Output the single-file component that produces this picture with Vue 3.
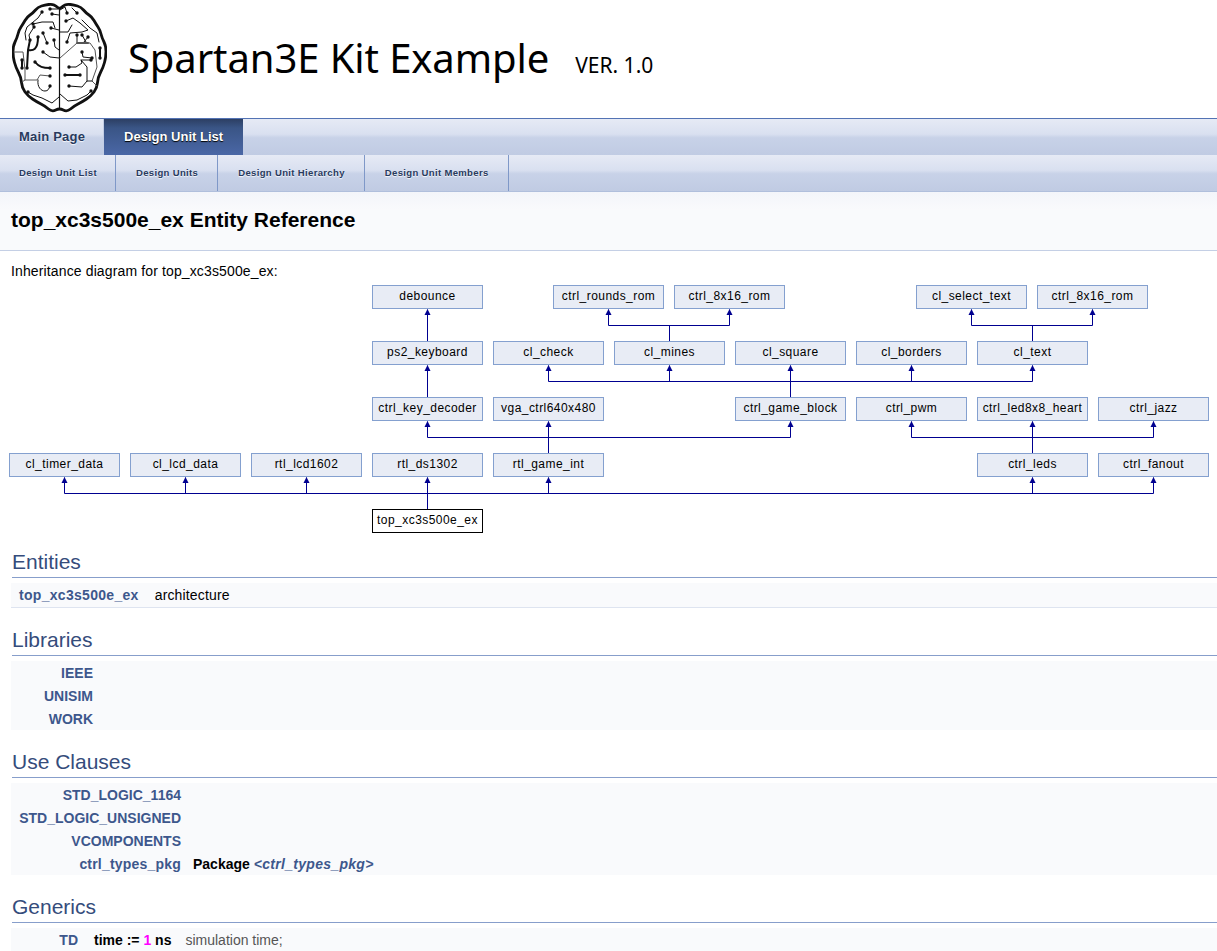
<script setup>
const boxW = 111
const boxH = 24
const diagramTop = 251
const nodes = [
  { name: 'debounce', x: 372, y: 285 },
  { name: 'ctrl_rounds_rom', x: 553, y: 285 },
  { name: 'ctrl_8x16_rom', x: 674, y: 285 },
  { name: 'cl_select_text', x: 916, y: 285 },
  { name: 'ctrl_8x16_rom', x: 1037, y: 285 },
  { name: 'ps2_keyboard', x: 372, y: 341 },
  { name: 'cl_check', x: 493, y: 341 },
  { name: 'cl_mines', x: 614, y: 341 },
  { name: 'cl_square', x: 735, y: 341 },
  { name: 'cl_borders', x: 856, y: 341 },
  { name: 'cl_text', x: 977, y: 341 },
  { name: 'ctrl_key_decoder', x: 372, y: 397 },
  { name: 'vga_ctrl640x480', x: 493, y: 397 },
  { name: 'ctrl_game_block', x: 735, y: 397 },
  { name: 'ctrl_pwm', x: 856, y: 397 },
  { name: 'ctrl_led8x8_heart', x: 977, y: 397 },
  { name: 'ctrl_jazz', x: 1098, y: 397 },
  { name: 'cl_timer_data', x: 9, y: 453 },
  { name: 'cl_lcd_data', x: 130, y: 453 },
  { name: 'rtl_lcd1602', x: 251, y: 453 },
  { name: 'rtl_ds1302', x: 372, y: 453 },
  { name: 'rtl_game_int', x: 493, y: 453 },
  { name: 'ctrl_leds', x: 977, y: 453 },
  { name: 'ctrl_fanout', x: 1098, y: 453 },
  { name: 'top_xc3s500e_ex', x: 372, y: 509, root: true }
]

// x of each arrow head + y just below the parent box
const arrows = [
  [427, 309], [608, 309], [729, 309], [971, 309], [1092, 309],
  [427, 365], [548, 365], [669, 365], [790, 365], [911, 365], [1032, 365],
  [427, 421], [548, 421], [790, 421], [911, 421], [1032, 421], [1153, 421],
  [64, 477], [185, 477], [306, 477], [427, 477], [548, 477], [1032, 477], [1153, 477]
]

const wires = [
  'M427 309V341', 'M427 365V397', 'M427 477V509',
  'M608 309V325H729V309', 'M669 325V341',
  'M971 309V325H1092V309', 'M1032 325V341',
  'M548 365V381H1032V365', 'M669 365V381', 'M790 365V397', 'M911 365V381',
  'M427 421V437H790V421', 'M548 421V453',
  'M911 421V437H1153V421', 'M1032 421V453',
  'M64 477V493H1153V477', 'M185 477V493', 'M306 477V493', 'M548 477V493', 'M1032 477V493'
]

// brain outline, smoothed through the midpoints of these corners
const outline = [
  [59.5, 9], [56, 6], [52, 4], [45, 5], [38, 7], [33, 13], [27, 17], [23, 24], [19, 30], [17, 38], [13, 46], [13, 57],
  [16, 68], [21, 77], [22, 88], [28, 96], [37, 102], [45, 106], [52, 112], [59.5, 108],
  [67, 112], [74, 106], [82, 102], [91, 96], [97, 88], [98, 77], [103, 68], [106, 57], [106, 46], [102, 38],
  [100, 30], [96, 24], [92, 17], [86, 13], [81, 7], [74, 5], [67, 4], [63, 6]
]
const mid = (a, b) => `${(a[0] + b[0]) / 2} ${(a[1] + b[1]) / 2}`
const brainOutline = 'M' + mid(outline[0], outline[1]) + outline.map((p, i) => {
  const next = outline[(i + 2) % outline.length]
  const cur = outline[(i + 1) % outline.length]
  return `Q${cur[0]} ${cur[1]} ${mid(cur, next)}`
}).join('') + 'Z'

const brainDots = [
  [50, 9], [42, 12], [52, 14], [33, 24], [34, 27], [51, 28], [30, 40], [38, 37], [43, 33], [47, 43], [54, 40],
  [43, 52], [22, 60], [22, 68], [27, 68], [35, 62], [50, 68], [50, 76], [50, 86], [28, 92],
  [67, 13], [77, 13], [66, 21], [67, 42], [77, 35], [82, 35], [88, 37], [100, 48], [100, 58], [82, 52], [92, 58],
  [91, 60], [69, 67], [65, 75], [80, 75], [69, 86], [91, 91]
]

const subTabs = ['Design Unit List', 'Design Units', 'Design Unit Hierarchy', 'Design Unit Members']
const libraries = ['IEEE', 'UNISIM', 'WORK']
const useClauses = ['STD_LOGIC_1164', 'STD_LOGIC_UNSIGNED', 'VCOMPONENTS']
</script>

<template>
  <div class="page">
    <header class="top">
      <svg class="logo" viewBox="12 2 95 112" width="95" height="112" fill="none" stroke="#111" stroke-linecap="round" stroke-linejoin="round">
        <path stroke-width="2.8" :d="brainOutline"/>
        <path stroke-width="1.2" d="M59.5 8V108"/>
        <path stroke-width="1" d="M50 9H58M52 14L59 15M42 12L38 18L27 27L25 33L26 40M33 24L42 22H53L55 28M51 28L59 30M34 27L29 35L30 40M43 33L47 43M54 40L55 47L59 50M43 52L50 57L59 58"/>
        <path stroke-width="2" d="M30 40L28 50L27 68M28 50C33 51 38 50 38 37M22 60V68M35 62C39 67 43 68 50 68"/>
        <path stroke-width="1" stroke="#555" d="M14 52H23L25 70V80L22 82M25 80H37L40 75L50 76"/>
        <path stroke-width="1" d="M38 80C37 87 41 91 45 91C48 91 49 89 50 86M28 92L33 95L42 98L52 103L59 97"/>
        <path stroke-width="1" d="M60 10L65 7L67 13M77 13L72 8M66 21L73 18L80 23L88 30L82 32L70 33L67 42M82 20L90 28L97 33L99 42M77 35V42M82 35L86 42M88 37L84 42M60 32H68L72 25"/>
        <path stroke-width="1" stroke="#555" d="M60 58L77 43H90L95 50L97 67L92 81L97 86"/>
        <path stroke-width="2" stroke="#555" d="M77 43H88"/>
        <path stroke-width="2" d="M100 48V58M65 75H80"/>
        <path stroke-width="1" d="M82 52L83 57L92 58M91 60H81L82 63L76 67H69M81 60L87 67V81M69 86L82 87L87 81H92M91 91L87 95L77 100L68 101L60 94"/>
        <g fill="#111" stroke="none">
          <circle v-for="d in brainDots" :key="d.join()" :cx="d[0]" :cy="d[1]" r="1.7"/>
        </g>
      </svg>
      <div class="project">Spartan3E Kit Example</div>
      <div class="version">VER. 1.0</div>
    </header>

    <nav class="tabs">
      <a class="tab">Main Page</a>
      <a class="tab current">Design Unit List</a>
    </nav>
    <nav class="subtabs">
      <a v-for="t in subTabs" :key="t" class="subtab">{{ t }}</a>
    </nav>

    <div class="heading"><h1>top_xc3s500e_ex Entity Reference</h1></div>

    <section class="diagram">
      <p class="caption">Inheritance diagram for top_xc3s500e_ex:</p>
      <svg class="wires" width="1217" height="297" :viewBox="`0 ${diagramTop} 1217 297`" fill="none">
        <path v-for="w in wires" :key="w" :d="w" transform="translate(0.5 0.5)" stroke="#000090" stroke-width="1"/>
        <path v-for="a in arrows" :key="a.join()" :d="`M${a[0] + 0.5} ${a[1]}l3 6h-6z`" fill="#000090"/>
      </svg>
      <div
        v-for="n in nodes"
        :key="n.name + n.x"
        class="node"
        :class="{ root: n.root }"
        :style="{ left: n.x + 'px', top: n.y - diagramTop + 'px', width: boxW + 'px', height: boxH + 'px' }"
      >{{ n.name }}</div>
    </section>

    <h2 class="group">Entities</h2>
    <div class="table entities">
      <span class="name">top_xc3s500e_ex</span>
      <span class="desc">architecture</span>
    </div>

    <h2 class="group">Libraries</h2>
    <div class="table">
      <div v-for="l in libraries" :key="l" class="row lib"><span class="name">{{ l }}</span></div>
    </div>

    <h2 class="group">Use Clauses</h2>
    <div class="table">
      <div v-for="u in useClauses" :key="u" class="row use"><span class="name">{{ u }}</span></div>
      <div class="row use">
        <span class="name lower">ctrl_types_pkg</span>
        <span class="pkg">Package <em>&lt;ctrl_types_pkg&gt;</em></span>
      </div>
    </div>

    <h2 class="group">Generics</h2>
    <div class="table">
      <div class="row gen">
        <span class="name">TD</span>
        <span class="type">time := <i>1</i> ns</span>
        <span class="note">simulation time;</span>
      </div>
    </div>
  </div>
</template>

<style scoped>
.page {
  position: relative;
  width: 1217px;
  height: 951px;
  overflow: hidden;
  font-family: "Liberation Sans", Arial, sans-serif;
  font-size: 14px;
  color: #000;
  background: #fff;
}

.top {
  height: 119px;
  display: flex;
  align-items: flex-start;
  padding: 2px 0 0 12px;
  box-sizing: border-box;
  border-bottom: 1px solid #5373b4;
}
.logo { flex: none; }
.project {
  font-family: "Noto Sans", sans-serif;
  font-size: 40px;
  line-height: 54px;
  letter-spacing: -0.1px;
  margin-left: 21px;
  margin-top: 29px;
}
.version {
  font-family: "Noto Sans", sans-serif;
  font-size: 21px;
  line-height: 28px;
  margin-left: 26px;
  margin-top: 49px;
}

.tabs, .subtabs {
  display: flex;
  background: linear-gradient(#e6eaf5 0, #d9e0f0 42%, #c8d2e8 52%, #c0cbe3 100%);
}
.tabs { height: 36px; }
.subtabs { height: 37px; box-sizing: border-box; border-bottom: 1px solid #b0bfdc; }

.tab {
  padding: 0 18px 0 19px;
  line-height: 35px;
  font-weight: bold;
  font-size: 13px;
  letter-spacing: 0.2px;
  color: #283a5d;
  text-shadow: 0 1px 1px rgba(255, 255, 255, 0.9);
  border-right: 1px solid #c2cde4;
}
.tab.current {
  padding: 0 20px;
  letter-spacing: 0;
  color: #fff;
  text-shadow: 0 1px 1px #000;
  border-right: none;
  background: linear-gradient(#2c3f63 0, #3a5586 25%, #4a67a6 100%);
}
.subtab {
  padding: 0 18px 0 19px;
  line-height: 36px;
  font-size: 9.5px;
  font-weight: bold;
  letter-spacing: 0.35px;
  color: #283a5d;
  text-shadow: 0 1px 1px rgba(255, 255, 255, 0.9);
  border-right: 1px solid #7f98c8;
}
.subtab + .subtab { padding-left: 20px; padding-right: 19px; }

.heading {
  height: 58px;
  box-sizing: content-box;
  display: flex;
  align-items: center;
  padding-left: 11px;
  background: linear-gradient(#f3f5fa 0, #f9fafc 30%);
  border-bottom: 1px solid #c4cfe5;
}
h1 {
  margin: 0 0 2px;
  font-size: 21px;
  font-weight: bold;
}

.diagram {
  position: relative;
  height: 297px;
}
.caption {
  position: relative;
  margin: 0;
  padding: 12px 0 0 11px;
  font-size: 14px;
  line-height: 16px;
  letter-spacing: 0.13px;
}
.wires { position: absolute; left: 0; top: 0; }
.node {
  position: absolute;
  box-sizing: border-box;
  background: #e8ecf5;
  border: 1px solid #84a0cf;
  font-family: "Liberation Sans", sans-serif;
  font-size: 12px;
  letter-spacing: 0.45px;
  text-align: center;
  line-height: 20px;
  color: #000;
}
.node.root {
  background: #fff;
  border-color: #000;
}

.group {
  margin: 0 0 0 12px;
  font-size: 21px;
  font-weight: normal;
  line-height: 28px;
  color: #354c7b;
  border-bottom: 1px solid #879ecb;
  padding-bottom: 1px;
}
.table {
  margin: 5px 0 18px 11px;
  background: #f9fafc;
}
.table.entities {
  height: 24px;
  display: flex;
  align-items: center;
  border-bottom: 1px solid #dee4f0;
  padding: 0 0 0 8px;
}
.row {
  display: flex;
  align-items: center;
  height: 23px;
}
.name {
  font-weight: bold;
  color: #3d578c;
}
.entities .name { letter-spacing: 0.3px; }
.entities .desc { margin-left: 16px; letter-spacing: 0.15px; }
.lib .name { width: 82px; text-align: right; }
.use .name { width: 170px; text-align: right; }
.use .name.lower { letter-spacing: 0.2px; }
.pkg { margin-left: 12px; font-weight: bold; }
.pkg em { color: #3d578c; letter-spacing: 0.3px; }
.gen .name { width: 67px; text-align: right; }
.type { margin-left: 16px; font-weight: bold; }
.type i { font-style: normal; color: #f0f; }
.note { margin-left: 14px; color: #555; }
</style>
